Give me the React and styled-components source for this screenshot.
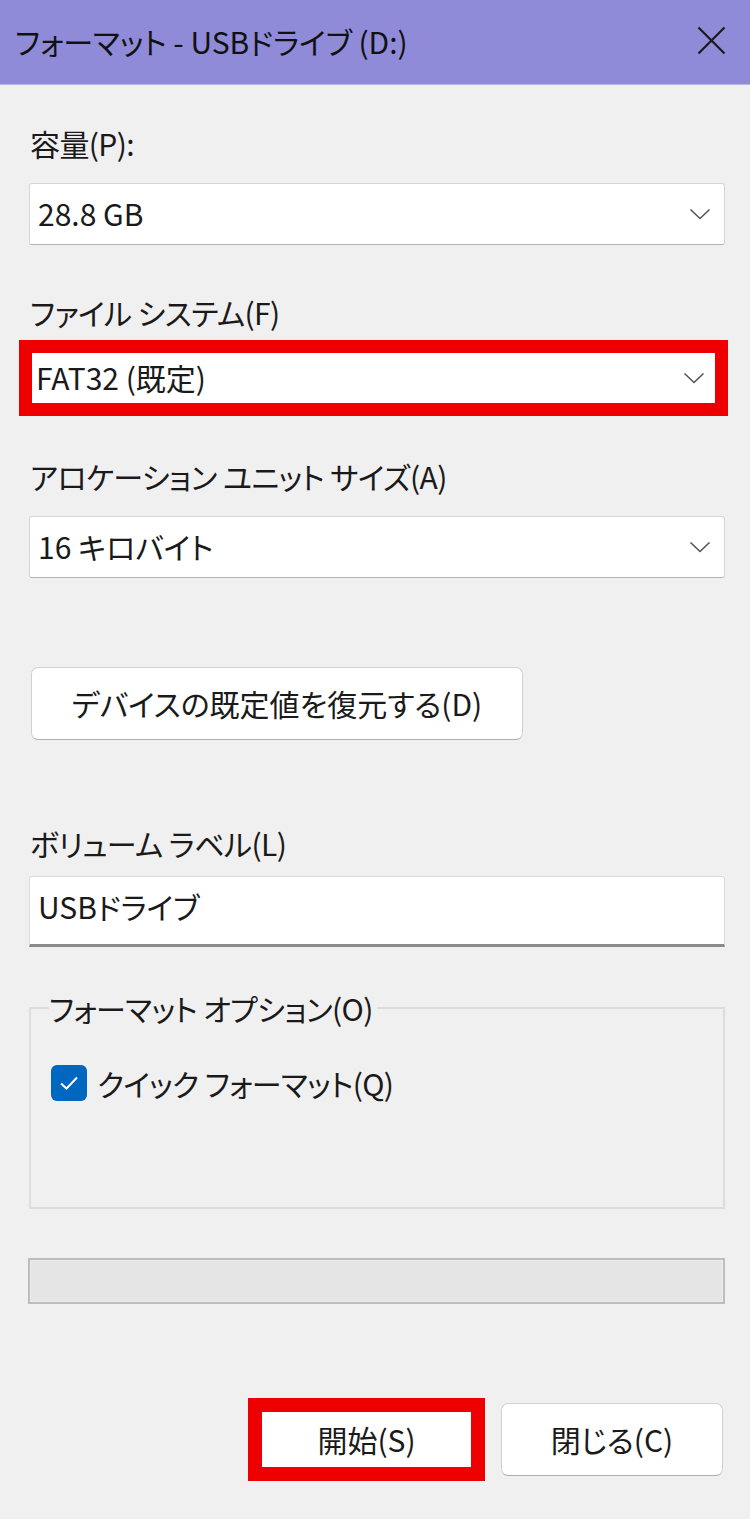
import React from "react";
import styled, { createGlobalStyle } from "styled-components";

const Global = createGlobalStyle`
  html, body { margin: 0; padding: 0; background: #f0f0f0; }
  body { font-family: "Noto Sans CJK JP", "Noto Sans", sans-serif; font-feature-settings: "palt"; color: #1a1a1a; }
  * { box-sizing: border-box; }
`;

const Window = styled.div`
  width: 750px;
  height: 1519px;
  background: #f0f0f0;
  display: flex;
  flex-direction: column;
  overflow: hidden;
`;

const TitleBar = styled.div`
  height: 85px;
  background: #8f8bd8;
  border-bottom: 1px solid #b9b6e6;
  display: flex;
  align-items: center;
  justify-content: space-between;
  padding: 0 24px 0 15px;
`;

const Title = styled.div`
  font-size: 30px;
  color: #111;
  padding-bottom: 2px;
`;

const CloseIcon = styled.svg`
  width: 29px;
  height: 29px;
  margin-bottom: 4px;
`;

const Body = styled.div`
  display: flex;
  flex-direction: column;
  padding: 0 25px 0 29px;
`;

const Label = styled.div`
  font-size: 30px;
  letter-spacing: -0.6px;
  line-height: 40px;
  height: 40px;
  padding-left: 1px;
  margin-top: ${(p) => p.$mt || 0}px;
  margin-bottom: ${(p) => p.$mb || 20}px;
`;

const Select = styled.div`
  height: ${(p) => (p.$highlight ? 76 : 62)}px;
  background: #fff;
  border: ${(p) => (p.$highlight ? "13px solid #ee0000" : "1px solid #d6d6d6")};
  border-bottom-color: ${(p) => (p.$highlight ? "#ee0000" : "#b4b4b4")};
  border-radius: ${(p) => (p.$highlight ? 0 : 3)}px;
  margin: ${(p) => (p.$highlight ? "-12px -3px -2px -10px" : "0")};
  display: flex;
  align-items: center;
  justify-content: space-between;
  padding: ${(p) => (p.$highlight ? "0 10px 0 4px" : "0 13px 0 8px")};
  font-size: 30px;
`;

const SelectText = styled.span`
  padding-bottom: 2px;
`;

const Chevron = styled.svg`
  width: 22px;
  height: 12px;
`;

const PushButton = styled.button`
  font-family: inherit;
  font-feature-settings: "palt";
  font-size: 30px;
  color: #1a1a1a;
  background: #fff;
  border: 1px solid #d0d0d0;
  border-bottom-color: #b0b0b0;
  border-radius: 7px;
  height: 73px;
  width: ${(p) => p.$w}px;
  margin-top: ${(p) => p.$mt || 0}px;
  margin-left: ${(p) => p.$ml || 0}px;
  padding: 0 0 2px;
  display: flex;
  align-items: center;
  justify-content: center;
`;

const TextInput = styled.div`
  height: 71px;
  background: #fff;
  border: 1px solid #dcdcdc;
  border-bottom: 3px solid #8a8a8a;
  border-radius: 3px 3px 0 0;
  font-size: 30px;
  padding: 4px 8px 0;
  line-height: 50px;
`;

const Group = styled.fieldset`
  margin: 43px 0 0;
  padding: 35px 20px 0 20px;
  border: 2px solid #dddddd;
  height: 219px;
  min-width: 0;
`;

const Legend = styled.legend`
  font-size: 30px;
  letter-spacing: -0.6px;
  padding: 0 4px 0 0;
  margin-left: -2px;
  line-height: 36px;
`;

const CheckRow = styled.label`
  display: flex;
  align-items: center;
  gap: 10px;
  font-size: 30px;
  letter-spacing: -0.6px;
`;

const CheckBox = styled.span`
  width: 36px;
  height: 36px;
  border-radius: 6px;
  background: #0067c0;
  display: flex;
  align-items: center;
  justify-content: center;
`;

const Progress = styled.div`
  margin-top: 49px;
  margin-left: -1px;
  height: 46px;
  background: #e5e5e5;
  border: 2px solid #bdbdbd;
  box-shadow: inset 0 0 0 1px #ececec;
`;

const Footer = styled.div`
  display: flex;
  justify-content: flex-end;
  align-items: center;
  margin-top: 94px;
  padding-right: 2px;
`;

const Highlight = styled.div`
  border: 14px solid #ee0000;
  width: 237px;
  height: 83px;
  background: #fff;
  display: flex;
  align-items: center;
  justify-content: center;
  font-size: 30px;
  margin-right: 16px;
  padding-bottom: 2px;
`;

const Chev = () => (
  <Chevron viewBox="0 0 22 12">
    <path d="M1.5 1.5 L11 10.5 L20.5 1.5" fill="none" stroke="#555" strokeWidth="1.6" />
  </Chevron>
);

export default function App() {
  return (
    <>
      <Global />
      <Window>
        <TitleBar>
          <Title>フォーマット - USBドライブ (D:)</Title>
          <CloseIcon viewBox="0 0 29 29">
            <path d="M1.5 1.5 L27.5 27.5 M27.5 1.5 L1.5 27.5" stroke="#1a1a1a" strokeWidth="2.2" fill="none" />
          </CloseIcon>
        </TitleBar>
        <Body>
          <Label $mt={38}>容量(P):</Label>
          <Select>
            <SelectText>28.8 GB</SelectText>
            <Chev />
          </Select>
          <Label $mt={47}>ファイル システム(F)</Label>
          <Select $highlight>
            <SelectText>FAT32 (既定)</SelectText>
            <Chev />
          </Select>
          <Label $mt={42}>アロケーション ユニット サイズ(A)</Label>
          <Select>
            <SelectText>16 キロバイト</SelectText>
            <Chev />
          </Select>
          <PushButton $w={492} $mt={89} $ml={2}>デバイスの既定値を復元する(D)</PushButton>
          <Label $mt={83} $mb={13}>ボリューム ラベル(L)</Label>
          <TextInput>USBドライブ</TextInput>
          <Group>
            <Legend>フォーマット オプション(O)</Legend>
            <CheckRow>
              <CheckBox>
                <svg width="20" height="16" viewBox="0 0 20 16">
                  <path d="M2 8.5 L7.5 13.5 L18 2.5" fill="none" stroke="#fff" strokeWidth="2" />
                </svg>
              </CheckBox>
              クイック フォーマット(Q)
            </CheckRow>
          </Group>
          <Progress />
          <Footer>
            <Highlight>開始(S)</Highlight>
            <PushButton $w={222}>閉じる(C)</PushButton>
          </Footer>
        </Body>
      </Window>
    </>
  );
}
